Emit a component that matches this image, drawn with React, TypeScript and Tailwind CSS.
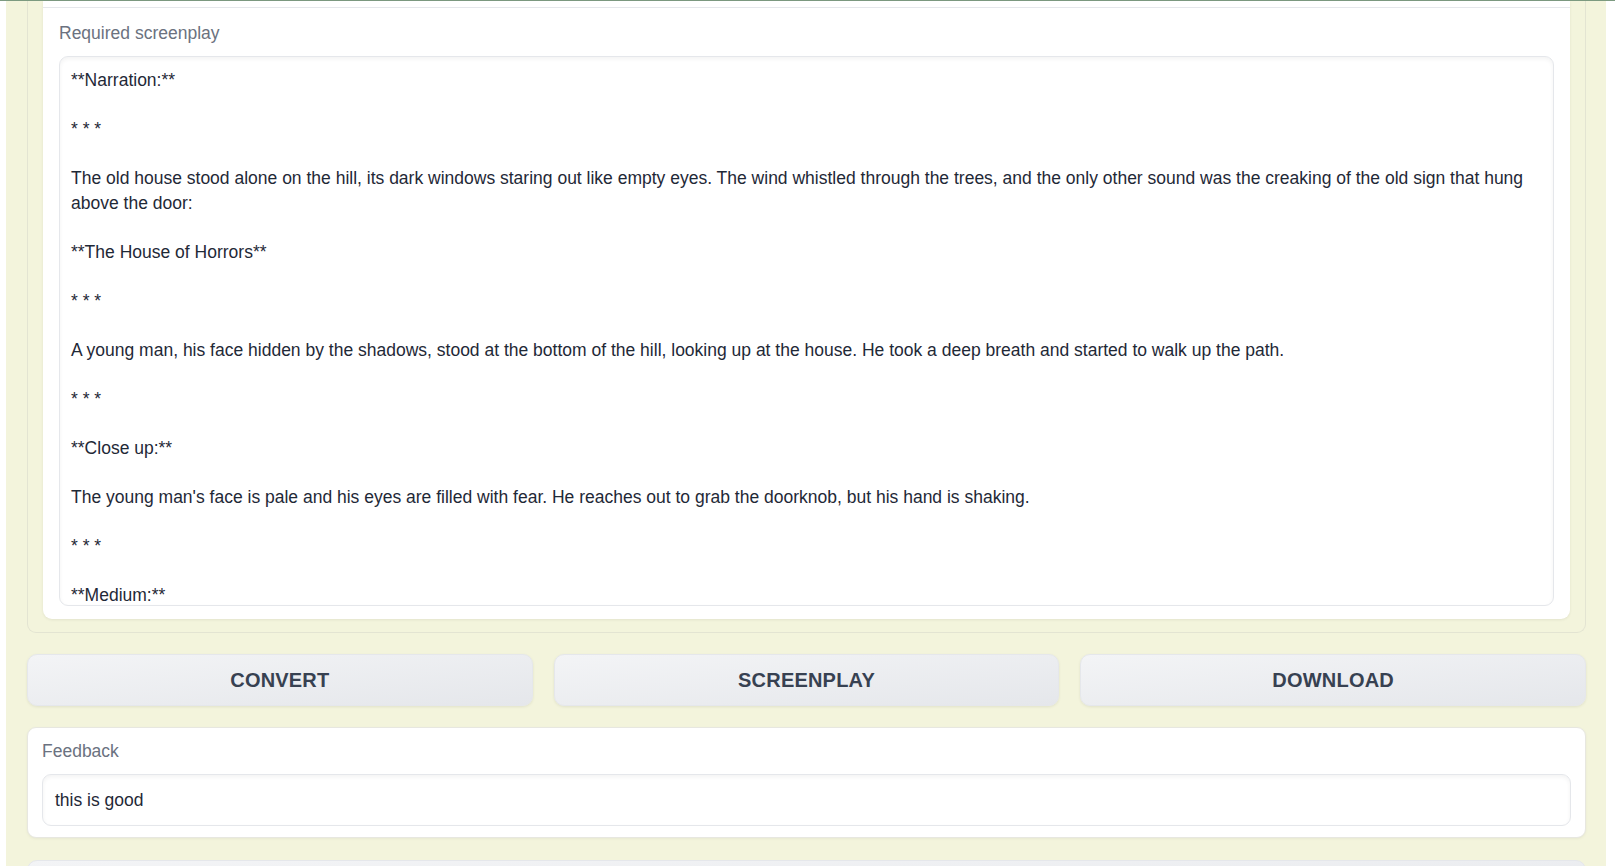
import React from "react";

const screenplay = `**Narration:**

* * *

The old house stood alone on the hill, its dark windows staring out like empty eyes. The wind whistled through the trees, and the only other sound was the creaking of the old sign that hung above the door:

**The House of Horrors**

* * *

A young man, his face hidden by the shadows, stood at the bottom of the hill, looking up at the house. He took a deep breath and started to walk up the path.

* * *

**Close up:**

The young man's face is pale and his eyes are filled with fear. He reaches out to grab the doorknob, but his hand is shaking.

* * *

**Medium:**`;

function ActionButton({ label }: { label: string }) {
  return (
    <button className="h-[52px] rounded-[10px] border border-[#e5e7eb] bg-gradient-to-br from-[#f3f4f6] to-[#e5e7eb] shadow-[0_1px_3px_rgba(0,0,0,0.08)] text-[20px] font-bold uppercase tracking-[0.2px] text-[#374151]">
      {label}
    </button>
  );
}

export default function App() {
  return (
    <div
      className="h-[866px] w-full overflow-hidden bg-white"
      style={{ fontFamily: '"Liberation Sans", Arial, sans-serif' }}
    >
      <div className="h-px w-full bg-[#7c9a80]" />
      <div className="ml-[6px] mr-[9px] h-[865px] bg-[#f3f4dc] pl-[21px] pr-[20px]">
        {/* Required screenplay block */}
        <div className="rounded-b-[9px] border-x border-b border-[#e3e4d2] px-[15px] pb-[13px]">
          <div className="rounded-b-[9px] bg-white px-[16px] pb-[13px] shadow-[0_1px_3px_rgba(0,0,0,0.07)]">
            <div className="-mx-[16px] h-[7px] border-b border-[#e5e7eb]" />
            <div className="mt-[13px] text-[17.5px] leading-[24px] text-[#6b7280]">
              Required screenplay
            </div>
            <div className="mt-[11px] h-[550px] overflow-hidden rounded-[9px] border border-[#e5e7eb] bg-white pl-[11px] pr-[12px] pt-[11px] shadow-[inset_0_2px_4px_rgba(0,0,0,0.05)]">
              <div className="whitespace-pre-wrap text-[17.5px] leading-[24.5px] text-[#1f2937]">
                {screenplay}
              </div>
            </div>
          </div>
        </div>

        {/* Buttons */}
        <div className="mt-[21px] grid grid-cols-3 gap-x-[21px]">
          <ActionButton label="Convert" />
          <ActionButton label="Screenplay" />
          <ActionButton label="Download" />
        </div>

        {/* Feedback */}
        <div className="mt-[21px] rounded-[9px] border border-[#e7e7e0] bg-white px-[14px] pb-[11px] pt-[11px] shadow-[0_1px_3px_rgba(0,0,0,0.05)]">
          <div className="text-[17.5px] leading-[24px] text-[#6b7280]">Feedback</div>
          <div className="mt-[11px] rounded-[9px] border border-[#e5e7eb] bg-white px-[12px] py-[13px] shadow-[inset_0_2px_4px_rgba(0,0,0,0.05)]">
            <div className="text-[17.5px] leading-[24px] text-[#1f2937]">this is good</div>
          </div>
        </div>

        {/* Next block (partially visible) */}
        <div className="mt-[22px] h-[52px] rounded-[10px] border border-[#e5e7eb] bg-gradient-to-br from-[#f3f4f6] to-[#e5e7eb]" />
      </div>
    </div>
  );
}
